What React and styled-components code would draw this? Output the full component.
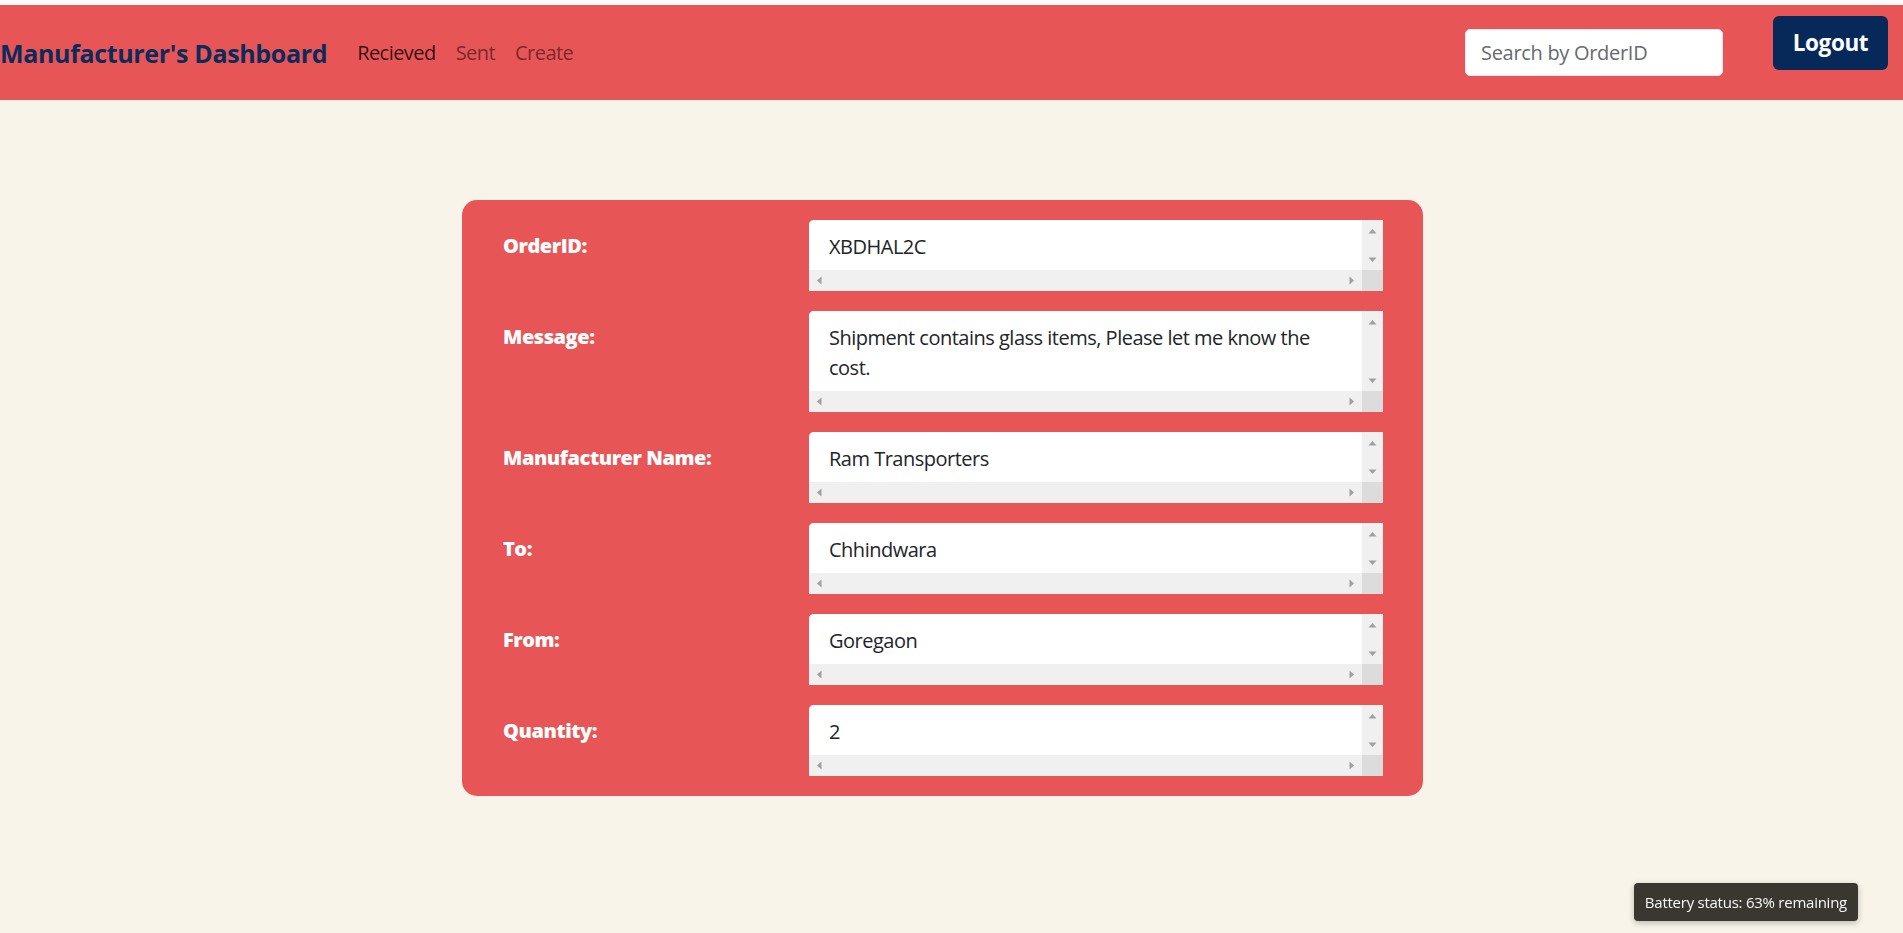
import React from "react";
import styled, { createGlobalStyle } from "styled-components";

const GlobalStyle = createGlobalStyle`
  html, body {
    margin: 0;
    padding: 0;
    background: #f8f4e9;
    font-family: "Open Sans", "Noto Sans", sans-serif;
  }
  * { box-sizing: border-box; }
`;

const RED = "#e85556";
const NAVY = "#06295a";
const ARROW = "#a0a0a0";

const Page = styled.div`
  min-height: 100vh;
  background: #f8f4e9;
  border-top: 5px solid #fbfbfb;
`;

const Navbar = styled.header`
  display: flex;
  align-items: center;
  height: 95px;
  background: ${RED};
  padding: 0 15px 0 0;
`;

const Brand = styled.a`
  font-family: "Open Sans", sans-serif;
  font-weight: 700;
  font-size: 25px;
  color: #0a2c5c;
  text-decoration: none;
  margin-right: 20px;
  white-space: nowrap;
  letter-spacing: -0.35px;
`;

const NavList = styled.nav`
  display: flex;
  align-items: center;
`;

const NavLink = styled.a`
  font-size: 20px;
  padding: 0 10px;
  color: ${(p) => (p.$active ? "rgba(0,0,0,0.82)" : "rgba(0,0,0,0.52)")};
  text-decoration: none;
  letter-spacing: -0.55px;
`;

const Spacer = styled.div`
  flex: 1;
`;

const Search = styled.input`
  width: 258px;
  height: 47px;
  border: 1px solid #f1e9e9;
  border-radius: 5px;
  background: #fff;
  padding: 0 15px;
  font-family: "Open Sans", sans-serif;
  font-size: 20px;
  color: #212529;
  outline: none;
  margin-right: 50px;
  &::placeholder {
    color: #666a6e;
    letter-spacing: -0.3px;
  }
`;

const LogoutButton = styled.button`
  align-self: flex-start;
  margin-top: 11px;
  width: 115px;
  height: 54px;
  border: none;
  border-radius: 6px;
  background: ${NAVY};
  color: #fff;
  font-family: "Open Sans", sans-serif;
  font-weight: 700;
  font-size: 22.5px;
  letter-spacing: -0.4px;
  line-height: 1;
  padding: 0;
  cursor: pointer;
`;

const Main = styled.main`
  display: flex;
  justify-content: center;
  padding: 100px 18px 0 0;
`;

const Card = styled.section`
  width: 961px;
  background: ${RED};
  border-radius: 15px;
  padding: 20px 40px 20px 41px;
  display: grid;
  grid-template-columns: 306px 574px;
  row-gap: 20px;
`;

const Label = styled.label`
  color: #fff;
  font-family: "Open Sans", sans-serif;
  font-weight: 800;
  font-size: 20px;
  line-height: 30px;
  padding-top: 11px;
  letter-spacing: -0.45px;
`;

const FieldBox = styled.div`
  display: grid;
  grid-template-columns: 1fr 21px;
  grid-template-rows: ${(p) => p.$rows * 30 + 20}px 21px;
  border-radius: 5px 0 0 0;
  overflow: hidden;
  background: #fff;
`;

const Field = styled.textarea`
  display: block;
  width: 100%;
  height: 100%;
  border: none;
  background: #fff;
  padding: 12px 20px 8px;
  font-family: "Open Sans", sans-serif;
  font-size: 20px;
  line-height: 30px;
  color: #212529;
  resize: none;
  overflow: hidden;
  outline: none;
  letter-spacing: -0.5px;
`;

const ScrollTrack = styled.div`
  display: flex;
  flex-direction: ${(p) => (p.$vertical ? "column" : "row")};
  justify-content: space-between;
  background: #f0f0f0;
`;

const ScrollButton = styled.span`
  display: flex;
  align-items: center;
  justify-content: center;
  width: 21px;
  height: 21px;
  flex: none;
`;

const ScrollCorner = styled.div`
  background: #dcdcdc;
`;

const ARROW_POINTS = {
  up: "6.5,13.5 14.5,13.5 10.5,9",
  down: "6.5,8.5 14.5,8.5 10.5,13",
  left: "12.5,6.5 12.5,14.5 8,10.5",
  right: "8.5,6.5 8.5,14.5 13,10.5",
};

function Arrow({ dir }) {
  return (
    <ScrollButton>
      <svg width="21" height="21" viewBox="0 0 21 21" aria-hidden="true">
        <polygon points={ARROW_POINTS[dir]} fill={ARROW} />
      </svg>
    </ScrollButton>
  );
}

const Toast = styled.div`
  position: fixed;
  right: 45px;
  bottom: 12px;
  height: 38px;
  padding: 0 11px;
  display: flex;
  align-items: center;
  background: #3a3731;
  color: #f7f7f7;
  border-radius: 4px;
  font-family: "Open Sans", sans-serif;
  font-size: 15px;
  letter-spacing: -0.25px;
  box-shadow: 0 2px 6px rgba(0, 0, 0, 0.25);
`;

const rows = [
  { label: "OrderID:", value: "XBDHAL2C", rows: 1 },
  {
    label: "Message:",
    value: "Shipment contains glass items, Please let me know the cost.",
    rows: 2,
  },
  { label: "Manufacturer Name:", value: "Ram Transporters", rows: 1 },
  { label: "To:", value: "Chhindwara", rows: 1 },
  { label: "From:", value: "Goregaon", rows: 1 },
  { label: "Quantity:", value: "2", rows: 1 },
];

export default function App() {
  return (
    <>
      <GlobalStyle />
      <Page>
        <Navbar>
          <Brand href="#">Manufacturer's Dashboard</Brand>
          <NavList>
            <NavLink href="#" $active>
              Recieved
            </NavLink>
            <NavLink href="#">Sent</NavLink>
            <NavLink href="#">Create</NavLink>
          </NavList>
          <Spacer />
          <Search placeholder="Search by OrderID" />
          <LogoutButton>Logout</LogoutButton>
        </Navbar>
        <Main>
          <Card>
            {rows.map((r, i) => (
              <React.Fragment key={r.label}>
                <Label htmlFor={`f${i}`}>{r.label}</Label>
                <FieldBox $rows={r.rows}>
                  <Field id={`f${i}`} readOnly defaultValue={r.value} />
                  <ScrollTrack $vertical>
                    <Arrow dir="up" />
                    <Arrow dir="down" />
                  </ScrollTrack>
                  <ScrollTrack>
                    <Arrow dir="left" />
                    <Arrow dir="right" />
                  </ScrollTrack>
                  <ScrollCorner />
                </FieldBox>
              </React.Fragment>
            ))}
          </Card>
        </Main>
        <Toast>Battery status: 63% remaining</Toast>
      </Page>
    </>
  );
}
